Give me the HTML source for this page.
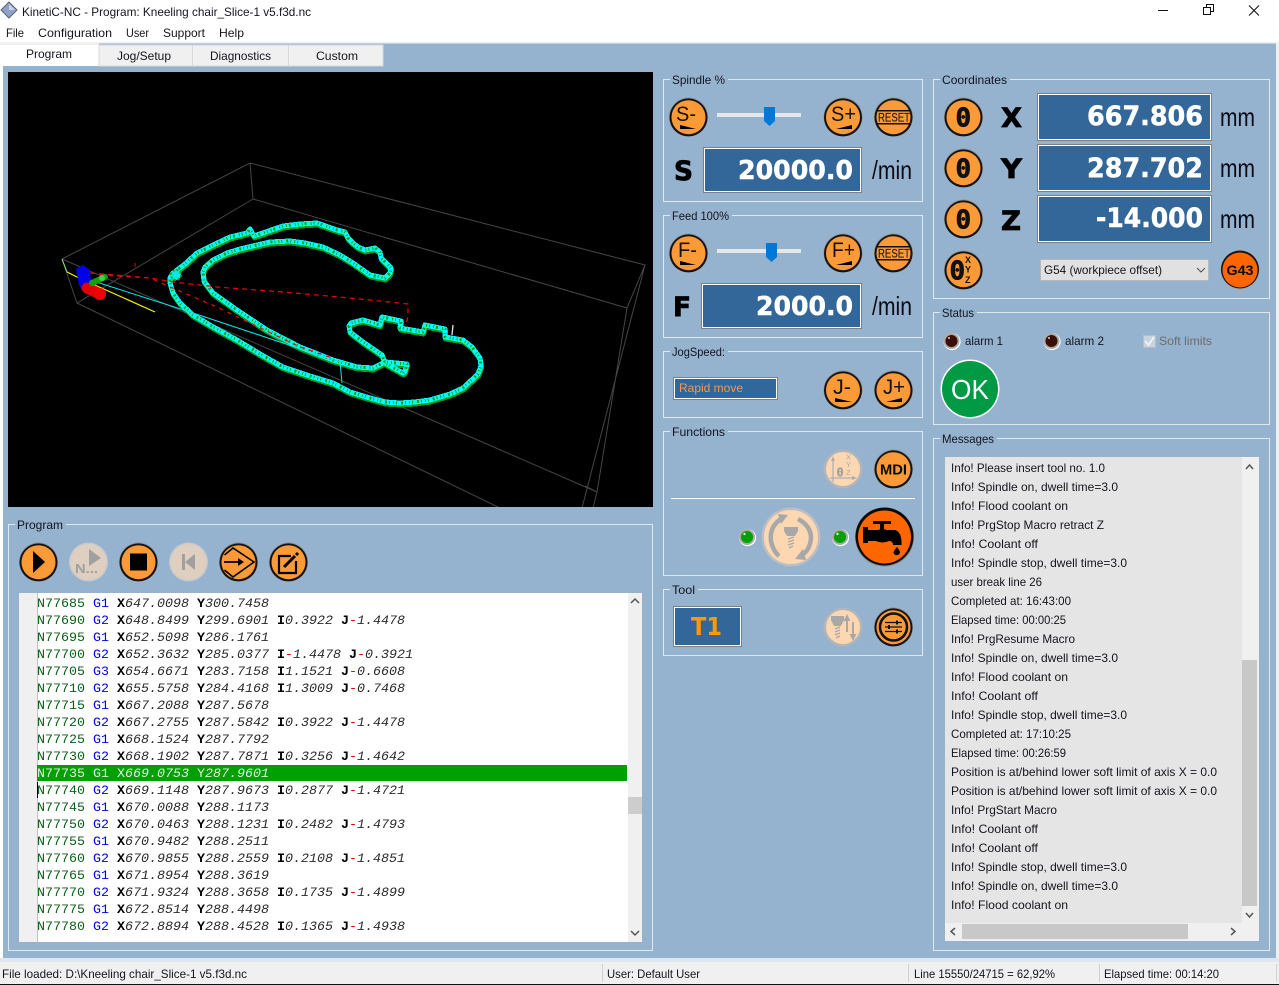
<!DOCTYPE html>
<html><head><meta charset="utf-8"><title>KinetiC-NC</title>
<style>
html,body{margin:0;padding:0;background:#fff;width:1279px;height:985px;overflow:hidden}
svg{position:absolute;left:0;top:0;display:block}
text{font-family:"Liberation Sans",sans-serif;font-size:12px;fill:#14141e;white-space:pre}
.gb{fill:none;stroke:#dfe8f0;stroke-width:1}
.lg{fill:#95b2cf}
.v{font-family:"DejaVu Sans",sans-serif;font-weight:bold;font-size:27px;fill:#fff;stroke:#fff;stroke-width:.5px}
.L{font-family:"DejaVu Sans",sans-serif;font-weight:bold;font-size:27px;fill:#000;stroke:#000;stroke-width:.8px}
.u{font-size:26px;fill:#0a0a14}
.bt{font-size:21px;fill:#111}
.m{font-size:12px}
.z{font-family:"DejaVu Sans Mono",monospace;font-weight:bold;font-size:26px;fill:#111;stroke:#111;stroke-width:.7px}
.code{font-family:"Liberation Mono",monospace;font-size:13.33px;fill:#2a2a2a}
.n{fill:#0a5f14}.g{fill:#0000f0}.b{font-weight:bold;fill:#000}.i{font-style:italic;fill:#2a2a2a}.r{fill:#e00000}
.h tspan,.h{fill:#d8f0d8}
</style></head><body>
<svg width="1279" height="985" viewBox="0 0 1279 985" xmlns="http://www.w3.org/2000/svg">
<defs>
<g id="bo"><circle r="19.5" fill="#8f8f8f"/><circle cy=".4" r="19" fill="#141414"/><circle cy=".2" r="17" fill="#fd9a38"/></g>
<g id="bd"><circle r="19.5" fill="#b2b6ba"/><circle r="17" fill="#fdd7b2"/></g>
<g id="bg"><circle r="19.5" fill="#c9c9c9"/><circle r="18" fill="#decfc0"/></g>
<g id="led"><circle cx=".5" cy=".6" r="8.6" fill="#fff"/><circle r="8" fill="#a9a9a9"/><circle r="6" fill="#00a000"/><circle cx="-2.5" cy="-3" r="1.2" fill="#d8f5d8"/></g>
<g id="ledb"><circle cx=".5" cy=".6" r="8.6" fill="#fff"/><circle r="8" fill="#a9a9a9"/><circle r="6" fill="#3a0e00"/><circle cx="-2.5" cy="-3" r="1.1" fill="#c9b0a0"/></g>
<path id="ch" d="M173 273L185 264L197 253L213 245L230 237L247 233L250 229L254 236L283 226L300 224L317 223L337 230L345 232L348 238L353 243L358 247L365 250L375 248L380 252L381 258L391 268L390 273L385 278L370 275L353 263L340 255L323 247L305 243L290 241L270 242L257 245L240 249L227 253L213 260L205 267L203 272L204 281L213 293L237 310L267 330L300 347L333 360L357 367L373 368L385 362L407 364L405 371L403 373L385 363L382 355L363 342L350 332L349 326L351 323L363 320L380 325L382 317L401 321L400 328L423 332L425 325L445 329L445 337L463 340L472 347L480 358L481 366L478 374L463 388L450 394L430 400L415 402L400 403L385 402L370 398L350 392L333 383L310 376L283 367L260 354L237 340L215 328L193 315L180 303L173 293L170 283L170 278Z"/>
</defs>

<!-- chrome -->
<rect width="1279" height="985" fill="#fff"/>
<rect x="0" y="42" width="1279" height="3" fill="#f0f0f0"/>
<rect x="99" y="43.500" width="1177" height="24" fill="#95b2cf"/>
<rect x="3" y="66" width="1273" height="892" fill="#95b2cf"/>
<rect x="1276" y="43" width="3" height="920" fill="#f0f0f0"/>
<rect x="0" y="958" width="1279" height="4" fill="#dfe6ee"/>
<rect x="0" y="962" width="1279" height="22" fill="#f0f0f0"/>
<rect x="0" y="984" width="1279" height="1" fill="#111"/>
<rect x="602" y="964" width="1" height="18" fill="#d0d0d0"/><rect x="908" y="964" width="1" height="18" fill="#d0d0d0"/><rect x="1099" y="964" width="1" height="18" fill="#d0d0d0"/><rect x="1276" y="964" width="1" height="18" fill="#d0d0d0"/>

<!-- title -->
<polygon points="9,2 17,10 9,18 1,10" fill="#8fa3c8" stroke="#5a6478" stroke-width="1"/>
<polygon points="9,4 15,10 9,10" fill="#c9d4e6"/>
<text x="22" y="16" textLength="289" lengthAdjust="spacingAndGlyphs">KinetiC-NC - Program: Kneeling chair_Slice-1 v5.f3d.nc</text>
<rect x="1158" y="10" width="10" height="1" fill="#111"/>
<path d="M1206.500 7.500V4.500H1213.500V11.500H1210.500M1203.500 7.500H1210.500V14.500H1203.500Z" fill="none" stroke="#111"/>
<path d="M1249 5.500L1259 15.500M1259 5.500L1249 15.500" stroke="#111" stroke-width="1.100"/>
<text x="6" y="37" textLength="18" lengthAdjust="spacingAndGlyphs">File</text>
<text x="38" y="37" textLength="74" lengthAdjust="spacingAndGlyphs">Configuration</text>
<text x="126" y="37" textLength="23" lengthAdjust="spacingAndGlyphs">User</text>
<text x="163" y="37" textLength="42" lengthAdjust="spacingAndGlyphs">Support</text>
<text x="219" y="37" textLength="25" lengthAdjust="spacingAndGlyphs">Help</text>

<!-- tabs -->
<rect x="99" y="45" width="284" height="21" fill="#f0f0f0" stroke="#d9d9d9" stroke-width="1"/>
<rect x="192" y="45" width="1" height="21" fill="#d9d9d9"/><rect x="288" y="45" width="1" height="21" fill="#d9d9d9"/>
<text x="26" y="58" textLength="46" lengthAdjust="spacingAndGlyphs">Program</text>
<text x="117" y="60" textLength="54" lengthAdjust="spacingAndGlyphs">Jog/Setup</text>
<text x="210" y="60" textLength="61" lengthAdjust="spacingAndGlyphs">Diagnostics</text>
<text x="316" y="60" textLength="42" lengthAdjust="spacingAndGlyphs">Custom</text>

<!-- 3D view -->
<rect x="8" y="72" width="645" height="435" fill="#000"/>
<svg x="8" y="72" width="645" height="435" viewBox="8 72 645 435">
<g fill="none" stroke="#454545" stroke-width="1">
<path d="M62 259L250 163L645 265L627 308L253 199L250 163M62 259L77 303L253 199M77 303L500 508M62 259L597 492L627 308M645 265L582 508M597 492L593 508M585 486L597 492"/>
</g>
<g fill="none" stroke-linejoin="round" shape-rendering="crispEdges">
<use href="#ch" transform="translate(.5,2)" stroke="#129a12" stroke-width="5"/>
<use href="#ch" stroke="#00fcfc" stroke-width="5"/>
<use href="#ch" stroke="#12a012" stroke-width="3" stroke-dasharray="1 3 1 2 2 4 1 2"/>
<circle cx="176" cy="275" r="5" fill="#00e8e8" stroke="#12a012" stroke-width="2" stroke-dasharray="2 2"/>
</g>
<g fill="none">
<path d="M90 273L150 278L173 282L217 287L283 292L350 298L370 300L408 304L408 317L405 327" stroke="#f00000" stroke-width="1.200" stroke-dasharray="5 4"/>
<path d="M100 275L150 278L170 287L217 307L250 323L300 347L333 358" stroke="#f00000" stroke-width="1.200" stroke-dasharray="4 5"/>
<path d="M135 263V267" stroke="#f00000"/>
<path d="M67 272L77 277L155 312" stroke="#f5f500" stroke-width="1.200"/>
<path d="M62 259L67 272" stroke="#90f090"/>
<path d="M90 280L190 312L340 362L342 383" stroke="#00e8e8" stroke-width="1"/>
<path d="M453 325L452 335" stroke="#e8e8e8" stroke-width="1.300"/>
</g>
<polygon points="76,269 83,265 90,270 91,283 82,290 79,285" fill="#0000e8"/>
<path d="M87 288L100 294" stroke="#e00000" stroke-width="11" stroke-linecap="round"/><circle cx="100" cy="294" r="6" fill="#f00000"/>
<path d="M92 283L105 277" stroke="#0fa00f" stroke-width="6" stroke-linecap="round"/><circle cx="102" cy="278" r="3" fill="#40d040"/>
</svg>

<!-- group boxes -->
<g class="gb">
<rect class="gb" x="663.500" y="79.500" width="259" height="122"/>
<rect class="gb" x="663.500" y="215.500" width="259" height="122"/>
<rect class="gb" x="663.500" y="351.500" width="259" height="66"/>
<rect class="gb" x="663.500" y="431.500" width="259" height="144"/>
<rect class="gb" x="663.500" y="589.500" width="259" height="66"/>
<rect class="gb" x="933.500" y="79.500" width="336" height="219"/>
<rect class="gb" x="933.500" y="312.500" width="336" height="112"/>
<rect class="gb" x="933.500" y="438.500" width="336" height="512"/>
<rect class="gb" x="8.500" y="524.500" width="644" height="426"/>
</g>
<g class="lg">
<rect x="670" y="76" width="58" height="8"/><rect x="670" y="212" width="62" height="8"/><rect x="670" y="348" width="58" height="8"/><rect x="670" y="428" width="58" height="8"/><rect x="670" y="586" width="28" height="8"/><rect x="940" y="76" width="70" height="8"/><rect x="940" y="309" width="37" height="8"/><rect x="940" y="435" width="57" height="8"/><rect x="15" y="521" width="51" height="8"/>
</g>
<text x="672" y="84" textLength="53" lengthAdjust="spacingAndGlyphs">Spindle %</text>
<text x="672" y="220" textLength="57" lengthAdjust="spacingAndGlyphs">Feed 100%</text>
<text x="672" y="356" textLength="53" lengthAdjust="spacingAndGlyphs">JogSpeed:</text>
<text x="672" y="436" textLength="53" lengthAdjust="spacingAndGlyphs">Functions</text>
<text x="672" y="594" textLength="23" lengthAdjust="spacingAndGlyphs">Tool</text>
<text x="942" y="84" textLength="65" lengthAdjust="spacingAndGlyphs">Coordinates</text>
<text x="942" y="317" textLength="32" lengthAdjust="spacingAndGlyphs">Status</text>
<text x="942" y="443" textLength="52" lengthAdjust="spacingAndGlyphs">Messages</text>
<text x="17" y="529" textLength="46" lengthAdjust="spacingAndGlyphs">Program</text>

<!-- Spindle -->
<use href="#bo" x="688.500" y="117"/><text class="bt" x="676" y="121" textLength="20" lengthAdjust="spacingAndGlyphs">S-</text><polygon points="680,125 680,129 696,129" fill="#000"/>
<rect x="717" y="113" width="84" height="4" fill="#e6e6e6"/><polygon points="764,107 775,107 775,121 769.500,126 764,121" fill="#0078d7"/>
<use href="#bo" x="843" y="117"/><text class="bt" x="831" y="121" textLength="25" lengthAdjust="spacingAndGlyphs">S+</text><polygon points="836,129 852,125 852,129" fill="#000"/>
<use href="#bo" x="893.500" y="117"/><rect x="877" y="110" width="33" height="1.500" fill="#111"/><rect x="877" y="123" width="33" height="1.500" fill="#111"/><text x="878" y="121.500" font-size="12" textLength="32" lengthAdjust="spacingAndGlyphs" style="fill:#222;stroke:#222;stroke-width:.2px">RESET</text>
<text class="L" x="674" y="180" textLength="19" lengthAdjust="spacingAndGlyphs">S</text>
<rect x="703.500" y="147.500" width="158" height="45" fill="#336699" stroke="#808080"/><rect x="704.500" y="148.500" width="156" height="43" fill="none" stroke="#fff"/>
<text class="v" x="738" y="179" style="font-size:26px" textLength="115" lengthAdjust="spacingAndGlyphs">20000.0</text>
<text class="u" x="872" y="179" textLength="40" lengthAdjust="spacingAndGlyphs">/min</text>

<!-- Feed -->
<use href="#bo" x="688.500" y="253"/><text class="bt" x="678" y="257" textLength="19" lengthAdjust="spacingAndGlyphs">F-</text><polygon points="680,261 680,265 696,265" fill="#000"/>
<rect x="717" y="249" width="84" height="4" fill="#e6e6e6"/><polygon points="766,243 777,243 777,257 771.500,262 766,257" fill="#0078d7"/>
<use href="#bo" x="843" y="253"/><text class="bt" x="832" y="257" textLength="23" lengthAdjust="spacingAndGlyphs">F+</text><polygon points="836,265 852,261 852,265" fill="#000"/>
<use href="#bo" x="893.500" y="253"/><rect x="877" y="246" width="33" height="1.500" fill="#111"/><rect x="877" y="259" width="33" height="1.500" fill="#111"/><text x="878" y="257.500" font-size="12" textLength="32" lengthAdjust="spacingAndGlyphs" style="fill:#222;stroke:#222;stroke-width:.2px">RESET</text>
<text class="L" x="673" y="316" textLength="18" lengthAdjust="spacingAndGlyphs">F</text>
<rect x="701.500" y="283.500" width="160" height="45" fill="#336699" stroke="#808080"/><rect x="702.500" y="284.500" width="158" height="43" fill="none" stroke="#fff"/>
<text class="v" x="756" y="315" style="font-size:26px" textLength="97" lengthAdjust="spacingAndGlyphs">2000.0</text>
<text class="u" x="872" y="315" textLength="40" lengthAdjust="spacingAndGlyphs">/min</text>

<!-- Jog -->
<rect x="673.500" y="377.500" width="104" height="22" fill="#336699" stroke="#808080"/><rect x="674.500" y="378.500" width="102" height="20" fill="none" stroke="#fff"/>
<text x="679" y="392" textLength="64" lengthAdjust="spacingAndGlyphs" style="fill:#f09a50">Rapid move</text>
<use href="#bo" x="843" y="390"/><text class="bt" x="833" y="394" textLength="18" lengthAdjust="spacingAndGlyphs">J-</text><polygon points="835,398 835,402 852,402" fill="#000"/>
<use href="#bo" x="893.500" y="390"/><text class="bt" x="883" y="394" textLength="22" lengthAdjust="spacingAndGlyphs">J+</text><polygon points="886,402 902,398 902,402" fill="#000"/>

<!-- Functions -->
<use href="#bd" x="843" y="469"/>
<g stroke="#aeaeae" fill="none" stroke-width="1.200"><path d="M833 459V482M830 478H855"/></g>
<polygon points="833,456 831,461 835,461" fill="#aeaeae"/><polygon points="857,478 852,476 852,480" fill="#aeaeae"/>
<text x="836.500" y="476.500" style="font-family:'DejaVu Sans Mono',monospace;font-weight:bold;font-size:12px;fill:#a0a0a0;stroke:#a0a0a0;stroke-width:.3px">0</text>
<text x="846" y="459.500" style="font-size:7.500px;fill:#a8a8a8">X</text><text x="846" y="467" style="font-size:7.500px;fill:#a8a8a8">Y</text><text x="846" y="475" style="font-size:7.500px;fill:#a8a8a8">Z</text>
<use href="#bo" x="893.500" y="469"/><text x="880" y="474.500" style="font-size:15px;font-weight:bold;fill:#0a0a0a" textLength="27" lengthAdjust="spacingAndGlyphs">MDI</text>
<rect x="671" y="497" width="244" height="1" fill="#9da7b3"/><rect x="671" y="498" width="244" height="1" fill="#fff"/>
<use href="#led" x="747" y="537"/>
<circle cx="791" cy="537" r="29.500" fill="#bcbfc2"/><circle cx="791" cy="537" r="27" fill="#fdd7b2"/>
<g fill="none" stroke="#a8a8a8" stroke-width="4.500"><path d="M781 519Q769 527 771 541Q773 551 779 556"/><path d="M798 519Q811 526 811 538Q810 550 802 555"/></g>
<polygon points="778,514 788,515 781,524" fill="#a8a8a8"/><polygon points="795,559 806,560 803,549" fill="#a8a8a8"/>
<polygon points="784,527 798,527 798,531 795,536 787,536 784,531" fill="#a8a8a8"/>
<path d="M788 539L794 537M788 542L794 540M788 545L794 543M789 548L793 546" stroke="#a8a8a8" stroke-width="1.300"/>
<use href="#led" x="840" y="537"/>
<circle cx="884.500" cy="537" r="29.500" fill="#8a8a8a"/><circle cx="884.500" cy="536.500" r="29" fill="#0a0a0a"/><circle cx="884.500" cy="537" r="26.500" fill="#ff6600"/>
<rect x="873" y="521" width="18" height="3" fill="#000"/><rect x="880" y="524" width="4" height="7" fill="#000"/><rect x="863" y="527" width="5" height="16" fill="#000"/>
<path d="M868 530H878Q882 528 887 530H895Q902 532 901.500 545H893Q893 541 889 541Q882 544 876 541H868Z" fill="#000"/>
<path d="M897 547Q893.500 551 893.500 552.500A3.300 3.300 0 0 0 900 552.500Q900 551 897 547Z" fill="#000"/>

<!-- Tool -->
<rect x="673.500" y="606.500" width="68" height="40" fill="#336699" stroke="#808080"/><rect x="674.500" y="607.500" width="66" height="38" fill="none" stroke="#fff"/>
<text x="691" y="635" style="font-family:'DejaVu Sans',sans-serif;font-weight:bold;font-size:25px;fill:#ff9900" textLength="31" lengthAdjust="spacingAndGlyphs">T1</text>
<use href="#bd" x="843" y="627"/>
<polygon points="831,616 844,616 844,620 841,626 834,626 831,620" fill="#a8a8a8"/>
<path d="M835 629L840 627M835 632L840 630M835 635L840 633M836 638L840 636" stroke="#a8a8a8" stroke-width="1.300"/>
<path d="M847 619V632M853 622V636" stroke="#a8a8a8" stroke-width="2"/><polygon points="847,614 843.500,621 850.500,621" fill="#a8a8a8"/><polygon points="853,641 849.500,634 856.500,634" fill="#a8a8a8"/>
<use href="#bo" x="893.500" y="627"/>
<circle cx="893.500" cy="627" r="13.500" fill="none" stroke="#111" stroke-width="2.600"/>
<path d="M885 622.500H902M885 627H902M885 631.500H902" stroke="#111" stroke-width="1.200"/>
<rect x="896" y="620.500" width="2" height="4" fill="#111"/><rect x="888" y="625" width="2" height="4" fill="#111"/><rect x="896" y="629.500" width="2" height="4" fill="#111"/>

<!-- Coordinates -->
<use href="#bo" x="963.500" y="117"/><text class="z" x="955.500" y="126.500">0</text>
<use href="#bo" x="963.500" y="168"/><text class="z" x="955.500" y="177.500">0</text>
<use href="#bo" x="963.500" y="219"/><text class="z" x="955.500" y="228.500">0</text>
<use href="#bo" x="963.500" y="270"/><text class="z" x="949.500" y="279.500">0</text>
<text x="965" y="263" style="font-size:9px;font-weight:bold;fill:#111">X</text><text x="965" y="272.500" style="font-size:9px;font-weight:bold;fill:#111">Y</text><text x="965" y="283" style="font-size:9px;font-weight:bold;fill:#111">Z</text>
<text class="L" x="1001" y="127" textLength="21" lengthAdjust="spacingAndGlyphs">X</text>
<text class="L" x="1001" y="178" textLength="21" lengthAdjust="spacingAndGlyphs">Y</text>
<text class="L" x="1001" y="230" textLength="20" lengthAdjust="spacingAndGlyphs">Z</text>
<rect x="1037.500" y="93.500" width="174" height="47" fill="#336699" stroke="#808080"/><rect x="1038.500" y="94.500" width="172" height="45" fill="none" stroke="#fff"/>
<rect x="1037.500" y="144.500" width="174" height="47" fill="#336699" stroke="#808080"/><rect x="1038.500" y="145.500" width="172" height="45" fill="none" stroke="#fff"/>
<rect x="1037.500" y="195.500" width="174" height="47" fill="#336699" stroke="#808080"/><rect x="1038.500" y="196.500" width="172" height="45" fill="none" stroke="#fff"/>
<text class="v" x="1087" y="125" textLength="116" lengthAdjust="spacingAndGlyphs">667.806</text>
<text class="v" x="1087" y="177" textLength="116" lengthAdjust="spacingAndGlyphs">287.702</text>
<text class="v" x="1096" y="227" textLength="107" lengthAdjust="spacingAndGlyphs">-14.000</text>
<text class="u" x="1220" y="126" textLength="35" lengthAdjust="spacingAndGlyphs">mm</text>
<text class="u" x="1220" y="177" textLength="35" lengthAdjust="spacingAndGlyphs">mm</text>
<text class="u" x="1220" y="228" textLength="35" lengthAdjust="spacingAndGlyphs">mm</text>
<rect x="1040.500" y="259.500" width="168" height="21" fill="#e1e1e1" stroke="#b4b9bf"/>
<text x="1044" y="274" textLength="118" lengthAdjust="spacingAndGlyphs">G54 (workpiece offset)</text>
<path d="M1197 268L1201 272L1205 268" fill="none" stroke="#555" stroke-width="1.100"/>
<circle cx="1240" cy="270" r="19.500" fill="#a0a4a8"/><circle cx="1240" cy="269.500" r="19" fill="#161616"/><circle cx="1240" cy="270" r="17.500" fill="#ff6600"/>
<text x="1226.500" y="275" style="font-size:14px;font-weight:bold;fill:#0a0a0a" textLength="27" lengthAdjust="spacingAndGlyphs">G43</text>

<!-- Status -->
<use href="#ledb" x="951.500" y="341"/><text x="965" y="345" textLength="38" lengthAdjust="spacingAndGlyphs">alarm 1</text>
<use href="#ledb" x="1051.500" y="341"/><text x="1065" y="345" textLength="39" lengthAdjust="spacingAndGlyphs">alarm 2</text>
<rect x="1143.500" y="335.500" width="12" height="12" fill="#c8d3de" stroke="#b5bfc9"/><path d="M1145 341L1148.500 345L1154 337" fill="none" stroke="#f4f6f8" stroke-width="1.600"/>
<text x="1159" y="345" textLength="53" lengthAdjust="spacingAndGlyphs" style="fill:#6d6d6d">Soft limits</text>
<circle cx="970" cy="389" r="29.500" fill="#fff"/><circle cx="970" cy="389" r="28" fill="#009944"/>
<text x="951" y="399" style="font-size:28px;fill:#fff" textLength="38" lengthAdjust="spacingAndGlyphs">OK</text>

<!-- Messages -->
<rect x="945" y="457" width="314" height="484" fill="#f0f0f0"/>
<rect x="945" y="457" width="297" height="466" fill="#e5e5e5"/>
<rect x="1242" y="660" width="15" height="246" fill="#c8c8c8"/>
<rect x="962" y="924" width="226" height="15" fill="#c8c8c8"/>
<path d="M1246 469L1249.500 465L1253 469M1246 913L1249.500 917L1253 913M955 928L951 931.500L955 935M1231 928L1235 931.500L1231 935" fill="none" stroke="#555" stroke-width="1.500"/>
<text x="951" y="472" textLength="154" lengthAdjust="spacingAndGlyphs">Info! Please insert tool no. 1.0</text>
<text x="951" y="491" textLength="167" lengthAdjust="spacingAndGlyphs">Info! Spindle on, dwell time=3.0</text>
<text x="951" y="510" textLength="117" lengthAdjust="spacingAndGlyphs">Info! Flood coolant on</text>
<text x="951" y="529" textLength="153" lengthAdjust="spacingAndGlyphs">Info! PrgStop Macro retract Z</text>
<text x="951" y="548" textLength="87" lengthAdjust="spacingAndGlyphs">Info! Coolant off</text>
<text x="951" y="567" textLength="176" lengthAdjust="spacingAndGlyphs">Info! Spindle stop, dwell time=3.0</text>
<text x="951" y="586" textLength="91" lengthAdjust="spacingAndGlyphs">user break line 26</text>
<text x="951" y="605" textLength="120" lengthAdjust="spacingAndGlyphs">Completed at: 16:43:00</text>
<text x="951" y="624" textLength="115" lengthAdjust="spacingAndGlyphs">Elapsed time: 00:00:25</text>
<text x="951" y="643" textLength="124" lengthAdjust="spacingAndGlyphs">Info! PrgResume Macro</text>
<text x="951" y="662" textLength="167" lengthAdjust="spacingAndGlyphs">Info! Spindle on, dwell time=3.0</text>
<text x="951" y="681" textLength="117" lengthAdjust="spacingAndGlyphs">Info! Flood coolant on</text>
<text x="951" y="700" textLength="87" lengthAdjust="spacingAndGlyphs">Info! Coolant off</text>
<text x="951" y="719" textLength="176" lengthAdjust="spacingAndGlyphs">Info! Spindle stop, dwell time=3.0</text>
<text x="951" y="738" textLength="120" lengthAdjust="spacingAndGlyphs">Completed at: 17:10:25</text>
<text x="951" y="757" textLength="115" lengthAdjust="spacingAndGlyphs">Elapsed time: 00:26:59</text>
<text x="951" y="776" textLength="266" lengthAdjust="spacingAndGlyphs">Position is at/behind lower soft limit of axis X = 0.0</text>
<text x="951" y="795" textLength="266" lengthAdjust="spacingAndGlyphs">Position is at/behind lower soft limit of axis X = 0.0</text>
<text x="951" y="814" textLength="106" lengthAdjust="spacingAndGlyphs">Info! PrgStart Macro</text>
<text x="951" y="833" textLength="87" lengthAdjust="spacingAndGlyphs">Info! Coolant off</text>
<text x="951" y="852" textLength="87" lengthAdjust="spacingAndGlyphs">Info! Coolant off</text>
<text x="951" y="871" textLength="176" lengthAdjust="spacingAndGlyphs">Info! Spindle stop, dwell time=3.0</text>
<text x="951" y="890" textLength="167" lengthAdjust="spacingAndGlyphs">Info! Spindle on, dwell time=3.0</text>
<text x="951" y="909" textLength="117" lengthAdjust="spacingAndGlyphs">Info! Flood coolant on</text>

<!-- Program buttons -->
<use href="#bo" x="38.500" y="562"/><polygon points="33,551 45,562 33,573" fill="#000"/>
<use href="#bg" x="88.500" y="562"/><polygon points="89,549 101,558 89,566" fill="#a0a0a0"/><text x="75" y="573" style="font-size:13px;font-weight:bold;fill:#a0a0a0" textLength="23" lengthAdjust="spacingAndGlyphs">N...</text>
<use href="#bo" x="138.500" y="562"/><rect x="130" y="553.500" width="17" height="17" fill="#000"/>
<use href="#bg" x="188.500" y="562"/><rect x="182" y="554" width="3" height="16" fill="#a0a0a0"/><polygon points="185,562 195,554 195,570" fill="#a0a0a0"/>
<use href="#bo" x="238.500" y="562"/><path d="M224 562H241" stroke="#000" stroke-width="1.800"/><polygon points="244,562 238,558 238,566" fill="#000"/><path d="M224.500 555L233 548L254 562L233 577L224.500 570" fill="none" stroke="#000" stroke-width="1.600"/>
<use href="#bo" x="288.500" y="562"/><path d="M291 556H279V573H296V561" fill="none" stroke="#000" stroke-width="2.200"/><path d="M284 567L295 556" stroke="#000" stroke-width="3"/><path d="M296 555L298 553" stroke="#000" stroke-width="3"/>

<!-- Code -->
<rect x="19" y="593" width="623" height="349" fill="#fff"/>
<rect x="19" y="593" width="18" height="349" fill="#f0f0f0"/>
<rect x="37" y="593" width="1" height="349" fill="#c4c4c4"/>
<rect x="628" y="593" width="14" height="349" fill="#f0f0f0"/>
<rect x="628" y="797" width="14" height="17" fill="#cdcdcd"/>
<path d="M631 603L635 599L639 603M631 931L635 935L639 931" fill="none" stroke="#555" stroke-width="1.500"/>
<rect x="37" y="765" width="590" height="16" fill="#00a000"/>
<rect x="37" y="782" width="1" height="16" fill="#000"/>
<g class="code">
<text class="code" x="37" y="607"><tspan class="n">N77685</tspan> <tspan class="g">G1</tspan> <tspan class="b">X</tspan><tspan class="i">647.0098</tspan> <tspan class="b">Y</tspan><tspan class="i">300.7458</tspan></text>
<text class="code" x="37" y="624"><tspan class="n">N77690</tspan> <tspan class="g">G2</tspan> <tspan class="b">X</tspan><tspan class="i">648.8499</tspan> <tspan class="b">Y</tspan><tspan class="i">299.6901</tspan> <tspan class="b">I</tspan><tspan class="i">0.3922</tspan> <tspan class="b">J</tspan><tspan class="r">-</tspan><tspan class="i">1.4478</tspan></text>
<text class="code" x="37" y="641"><tspan class="n">N77695</tspan> <tspan class="g">G1</tspan> <tspan class="b">X</tspan><tspan class="i">652.5098</tspan> <tspan class="b">Y</tspan><tspan class="i">286.1761</tspan></text>
<text class="code" x="37" y="658"><tspan class="n">N77700</tspan> <tspan class="g">G2</tspan> <tspan class="b">X</tspan><tspan class="i">652.3632</tspan> <tspan class="b">Y</tspan><tspan class="i">285.0377</tspan> <tspan class="b">I</tspan><tspan class="r">-</tspan><tspan class="i">1.4478</tspan> <tspan class="b">J</tspan><tspan class="r">-</tspan><tspan class="i">0.3921</tspan></text>
<text class="code" x="37" y="675"><tspan class="n">N77705</tspan> <tspan class="g">G3</tspan> <tspan class="b">X</tspan><tspan class="i">654.6671</tspan> <tspan class="b">Y</tspan><tspan class="i">283.7158</tspan> <tspan class="b">I</tspan><tspan class="i">1.1521</tspan> <tspan class="b">J</tspan><tspan class="r">-</tspan><tspan class="i">0.6608</tspan></text>
<text class="code" x="37" y="692"><tspan class="n">N77710</tspan> <tspan class="g">G2</tspan> <tspan class="b">X</tspan><tspan class="i">655.5758</tspan> <tspan class="b">Y</tspan><tspan class="i">284.4168</tspan> <tspan class="b">I</tspan><tspan class="i">1.3009</tspan> <tspan class="b">J</tspan><tspan class="r">-</tspan><tspan class="i">0.7468</tspan></text>
<text class="code" x="37" y="709"><tspan class="n">N77715</tspan> <tspan class="g">G1</tspan> <tspan class="b">X</tspan><tspan class="i">667.2088</tspan> <tspan class="b">Y</tspan><tspan class="i">287.5678</tspan></text>
<text class="code" x="37" y="726"><tspan class="n">N77720</tspan> <tspan class="g">G2</tspan> <tspan class="b">X</tspan><tspan class="i">667.2755</tspan> <tspan class="b">Y</tspan><tspan class="i">287.5842</tspan> <tspan class="b">I</tspan><tspan class="i">0.3922</tspan> <tspan class="b">J</tspan><tspan class="r">-</tspan><tspan class="i">1.4478</tspan></text>
<text class="code" x="37" y="743"><tspan class="n">N77725</tspan> <tspan class="g">G1</tspan> <tspan class="b">X</tspan><tspan class="i">668.1524</tspan> <tspan class="b">Y</tspan><tspan class="i">287.7792</tspan></text>
<text class="code" x="37" y="760"><tspan class="n">N77730</tspan> <tspan class="g">G2</tspan> <tspan class="b">X</tspan><tspan class="i">668.1902</tspan> <tspan class="b">Y</tspan><tspan class="i">287.7871</tspan> <tspan class="b">I</tspan><tspan class="i">0.3256</tspan> <tspan class="b">J</tspan><tspan class="r">-</tspan><tspan class="i">1.4642</tspan></text>
<text class="code" x="37" y="777" style="fill:#e0f5e0">N77735 G1 X<tspan font-style="italic">669.0753</tspan> Y<tspan font-style="italic">287.9601</tspan></text>
<text class="code" x="37" y="794"><tspan class="n">N77740</tspan> <tspan class="g">G2</tspan> <tspan class="b">X</tspan><tspan class="i">669.1148</tspan> <tspan class="b">Y</tspan><tspan class="i">287.9673</tspan> <tspan class="b">I</tspan><tspan class="i">0.2877</tspan> <tspan class="b">J</tspan><tspan class="r">-</tspan><tspan class="i">1.4721</tspan></text>
<text class="code" x="37" y="811"><tspan class="n">N77745</tspan> <tspan class="g">G1</tspan> <tspan class="b">X</tspan><tspan class="i">670.0088</tspan> <tspan class="b">Y</tspan><tspan class="i">288.1173</tspan></text>
<text class="code" x="37" y="828"><tspan class="n">N77750</tspan> <tspan class="g">G2</tspan> <tspan class="b">X</tspan><tspan class="i">670.0463</tspan> <tspan class="b">Y</tspan><tspan class="i">288.1231</tspan> <tspan class="b">I</tspan><tspan class="i">0.2482</tspan> <tspan class="b">J</tspan><tspan class="r">-</tspan><tspan class="i">1.4793</tspan></text>
<text class="code" x="37" y="845"><tspan class="n">N77755</tspan> <tspan class="g">G1</tspan> <tspan class="b">X</tspan><tspan class="i">670.9482</tspan> <tspan class="b">Y</tspan><tspan class="i">288.2511</tspan></text>
<text class="code" x="37" y="862"><tspan class="n">N77760</tspan> <tspan class="g">G2</tspan> <tspan class="b">X</tspan><tspan class="i">670.9855</tspan> <tspan class="b">Y</tspan><tspan class="i">288.2559</tspan> <tspan class="b">I</tspan><tspan class="i">0.2108</tspan> <tspan class="b">J</tspan><tspan class="r">-</tspan><tspan class="i">1.4851</tspan></text>
<text class="code" x="37" y="879"><tspan class="n">N77765</tspan> <tspan class="g">G1</tspan> <tspan class="b">X</tspan><tspan class="i">671.8954</tspan> <tspan class="b">Y</tspan><tspan class="i">288.3619</tspan></text>
<text class="code" x="37" y="896"><tspan class="n">N77770</tspan> <tspan class="g">G2</tspan> <tspan class="b">X</tspan><tspan class="i">671.9324</tspan> <tspan class="b">Y</tspan><tspan class="i">288.3658</tspan> <tspan class="b">I</tspan><tspan class="i">0.1735</tspan> <tspan class="b">J</tspan><tspan class="r">-</tspan><tspan class="i">1.4899</tspan></text>
<text class="code" x="37" y="913"><tspan class="n">N77775</tspan> <tspan class="g">G1</tspan> <tspan class="b">X</tspan><tspan class="i">672.8514</tspan> <tspan class="b">Y</tspan><tspan class="i">288.4498</tspan></text>
<text class="code" x="37" y="930"><tspan class="n">N77780</tspan> <tspan class="g">G2</tspan> <tspan class="b">X</tspan><tspan class="i">672.8894</tspan> <tspan class="b">Y</tspan><tspan class="i">288.4528</tspan> <tspan class="b">I</tspan><tspan class="i">0.1365</tspan> <tspan class="b">J</tspan><tspan class="r">-</tspan><tspan class="i">1.4938</tspan></text>
</g>

<!-- Status bar -->
<text x="2" y="978" textLength="245" lengthAdjust="spacingAndGlyphs">File loaded: D:\Kneeling chair_Slice-1 v5.f3d.nc</text>
<text x="607" y="978" textLength="93" lengthAdjust="spacingAndGlyphs">User: Default User</text>
<text x="914" y="978" textLength="141" lengthAdjust="spacingAndGlyphs">Line 15550/24715 = 62,92%</text>
<text x="1104" y="978" textLength="115" lengthAdjust="spacingAndGlyphs">Elapsed time: 00:14:20</text>
</svg>
</body></html>
